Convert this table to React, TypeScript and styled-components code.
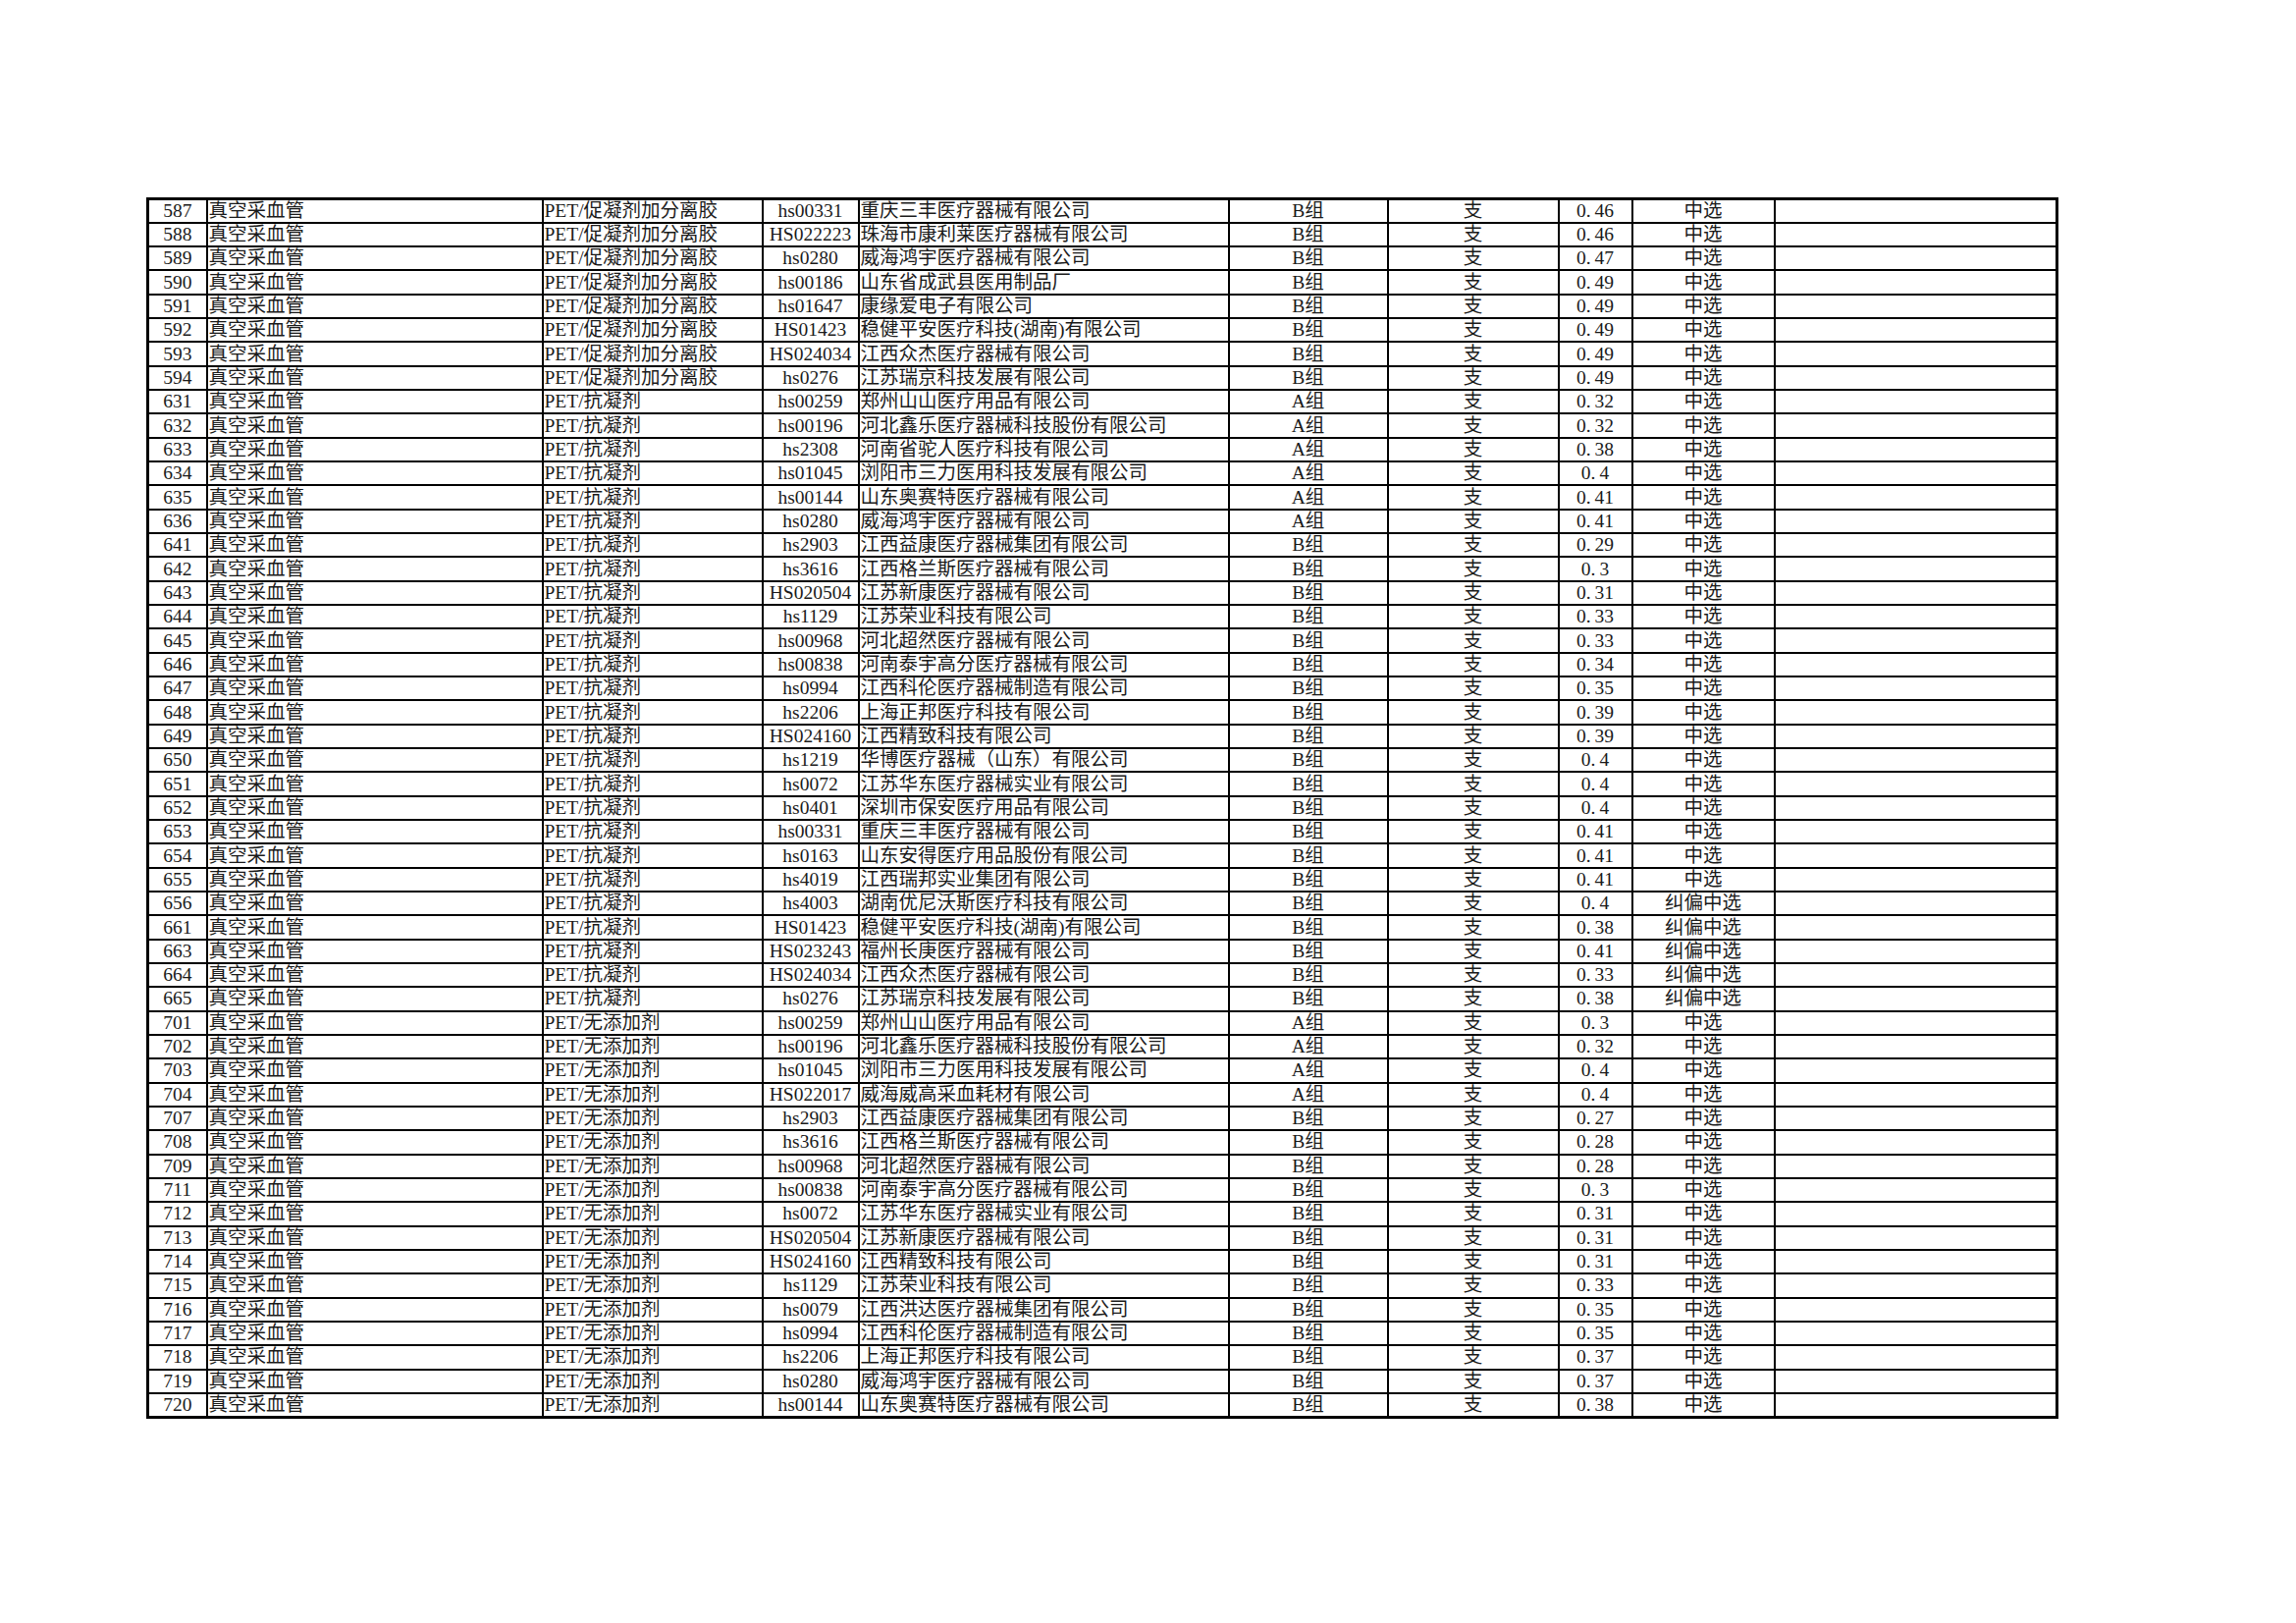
import React from "react";
import styled, { createGlobalStyle } from "styled-components";

const Global = createGlobalStyle`
  html, body { margin: 0; padding: 0; background: #fff; }
  body { font-family: "Liberation Serif", "Noto Sans CJK SC", serif; color: #111; }
`;

const Page = styled.div`
  width: 2339px;
  min-height: 1653px;
  box-sizing: border-box;
  padding: 201px 0 0 149px;
  background: #fff;
`;

const Table = styled.table`
  border-collapse: collapse;
  table-layout: fixed;
  width: 1945px;
  border: 3px solid #000;
`;

const Row = styled.tr`
  height: 24.34px;
`;

type Align = "left" | "center";

const Cell = styled.td<{ $align: Align }>`
  border: 2px solid #000;
  padding: 0 0 0 ${(p) => (p.$align === "left" ? "1px" : "0")};
  text-align: ${(p) => p.$align};
  font-family: "Liberation Serif", "Noto Sans CJK SC", serif;
  font-size: 19.5px;
  line-height: 20px;
  white-space: nowrap;
  overflow: hidden;
  vertical-align: middle;
  color: #1a1a1a;
`;

const Dot = styled.span`
  margin-right: 4px;
`;

const widths = [60, 342, 224, 98, 377, 162, 174, 75, 145, 288];

type R = [number, string, string, string, string, string, string];

const S1 = "PET/促凝剂加分离胶";
const S2 = "PET/抗凝剂";
const S3 = "PET/无添加剂";
const Z = "中选";
const J = "纠偏中选";

const rows: R[] = [
  [587, S1, "hs00331", "重庆三丰医疗器械有限公司", "B组", "0.46", Z],
  [588, S1, "HS022223", "珠海市康利莱医疗器械有限公司", "B组", "0.46", Z],
  [589, S1, "hs0280", "威海鸿宇医疗器械有限公司", "B组", "0.47", Z],
  [590, S1, "hs00186", "山东省成武县医用制品厂", "B组", "0.49", Z],
  [591, S1, "hs01647", "康缘爱电子有限公司", "B组", "0.49", Z],
  [592, S1, "HS01423", "稳健平安医疗科技(湖南)有限公司", "B组", "0.49", Z],
  [593, S1, "HS024034", "江西众杰医疗器械有限公司", "B组", "0.49", Z],
  [594, S1, "hs0276", "江苏瑞京科技发展有限公司", "B组", "0.49", Z],
  [631, S2, "hs00259", "郑州山山医疗用品有限公司", "A组", "0.32", Z],
  [632, S2, "hs00196", "河北鑫乐医疗器械科技股份有限公司", "A组", "0.32", Z],
  [633, S2, "hs2308", "河南省驼人医疗科技有限公司", "A组", "0.38", Z],
  [634, S2, "hs01045", "浏阳市三力医用科技发展有限公司", "A组", "0.4", Z],
  [635, S2, "hs00144", "山东奥赛特医疗器械有限公司", "A组", "0.41", Z],
  [636, S2, "hs0280", "威海鸿宇医疗器械有限公司", "A组", "0.41", Z],
  [641, S2, "hs2903", "江西益康医疗器械集团有限公司", "B组", "0.29", Z],
  [642, S2, "hs3616", "江西格兰斯医疗器械有限公司", "B组", "0.3", Z],
  [643, S2, "HS020504", "江苏新康医疗器械有限公司", "B组", "0.31", Z],
  [644, S2, "hs1129", "江苏荣业科技有限公司", "B组", "0.33", Z],
  [645, S2, "hs00968", "河北超然医疗器械有限公司", "B组", "0.33", Z],
  [646, S2, "hs00838", "河南泰宇高分医疗器械有限公司", "B组", "0.34", Z],
  [647, S2, "hs0994", "江西科伦医疗器械制造有限公司", "B组", "0.35", Z],
  [648, S2, "hs2206", "上海正邦医疗科技有限公司", "B组", "0.39", Z],
  [649, S2, "HS024160", "江西精致科技有限公司", "B组", "0.39", Z],
  [650, S2, "hs1219", "华博医疗器械（山东）有限公司", "B组", "0.4", Z],
  [651, S2, "hs0072", "江苏华东医疗器械实业有限公司", "B组", "0.4", Z],
  [652, S2, "hs0401", "深圳市保安医疗用品有限公司", "B组", "0.4", Z],
  [653, S2, "hs00331", "重庆三丰医疗器械有限公司", "B组", "0.41", Z],
  [654, S2, "hs0163", "山东安得医疗用品股份有限公司", "B组", "0.41", Z],
  [655, S2, "hs4019", "江西瑞邦实业集团有限公司", "B组", "0.41", Z],
  [656, S2, "hs4003", "湖南优尼沃斯医疗科技有限公司", "B组", "0.4", J],
  [661, S2, "HS01423", "稳健平安医疗科技(湖南)有限公司", "B组", "0.38", J],
  [663, S2, "HS023243", "福州长庚医疗器械有限公司", "B组", "0.41", J],
  [664, S2, "HS024034", "江西众杰医疗器械有限公司", "B组", "0.33", J],
  [665, S2, "hs0276", "江苏瑞京科技发展有限公司", "B组", "0.38", J],
  [701, S3, "hs00259", "郑州山山医疗用品有限公司", "A组", "0.3", Z],
  [702, S3, "hs00196", "河北鑫乐医疗器械科技股份有限公司", "A组", "0.32", Z],
  [703, S3, "hs01045", "浏阳市三力医用科技发展有限公司", "A组", "0.4", Z],
  [704, S3, "HS022017", "威海威高采血耗材有限公司", "A组", "0.4", Z],
  [707, S3, "hs2903", "江西益康医疗器械集团有限公司", "B组", "0.27", Z],
  [708, S3, "hs3616", "江西格兰斯医疗器械有限公司", "B组", "0.28", Z],
  [709, S3, "hs00968", "河北超然医疗器械有限公司", "B组", "0.28", Z],
  [711, S3, "hs00838", "河南泰宇高分医疗器械有限公司", "B组", "0.3", Z],
  [712, S3, "hs0072", "江苏华东医疗器械实业有限公司", "B组", "0.31", Z],
  [713, S3, "HS020504", "江苏新康医疗器械有限公司", "B组", "0.31", Z],
  [714, S3, "HS024160", "江西精致科技有限公司", "B组", "0.31", Z],
  [715, S3, "hs1129", "江苏荣业科技有限公司", "B组", "0.33", Z],
  [716, S3, "hs0079", "江西洪达医疗器械集团有限公司", "B组", "0.35", Z],
  [717, S3, "hs0994", "江西科伦医疗器械制造有限公司", "B组", "0.35", Z],
  [718, S3, "hs2206", "上海正邦医疗科技有限公司", "B组", "0.37", Z],
  [719, S3, "hs0280", "威海鸿宇医疗器械有限公司", "B组", "0.37", Z],
  [720, S3, "hs00144", "山东奥赛特医疗器械有限公司", "B组", "0.38", Z],
];

function Price({ value }: { value: string }) {
  const [a, b] = value.split(".");
  return (
    <>
      {a}
      <Dot>.</Dot>
      {b}
    </>
  );
}

export default function App() {
  return (
    <Page>
      <Global />
      <Table>
        <colgroup>
          {widths.map((w, i) => (
            <col key={i} style={{ width: w }} />
          ))}
        </colgroup>
        <tbody>
          {rows.map(([no, spec, code, company, group, price, status]) => (
            <Row key={no}>
              <Cell $align="center">{no}</Cell>
              <Cell $align="left">真空采血管</Cell>
              <Cell $align="left">{spec}</Cell>
              <Cell $align="center">{code}</Cell>
              <Cell $align="left">{company}</Cell>
              <Cell $align="center">{group}</Cell>
              <Cell $align="center">支</Cell>
              <Cell $align="center">
                <Price value={price} />
              </Cell>
              <Cell $align="center">{status}</Cell>
              <Cell $align="center"></Cell>
            </Row>
          ))}
        </tbody>
      </Table>
    </Page>
  );
}
